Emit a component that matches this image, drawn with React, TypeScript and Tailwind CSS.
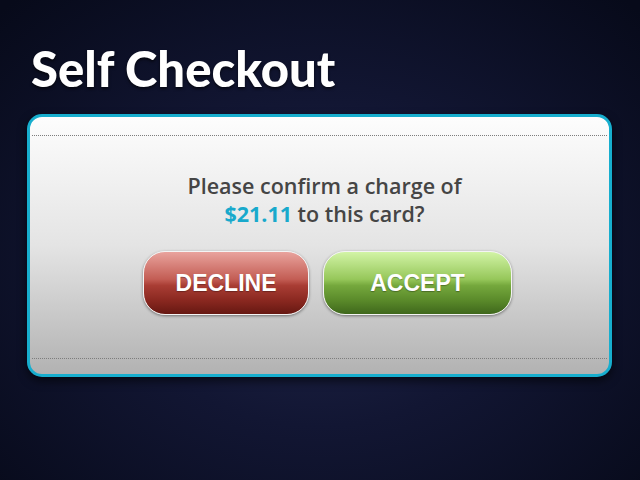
export default function App() {
  return (
    <div className="w-[640px] h-[480px] overflow-hidden bg-[radial-gradient(ellipse_70%_75%_at_50%_55%,#20264a_0%,#121633_45%,#070a1a_100%)] flex flex-col">
      {/* Title */}
      <h1 className="pl-[31px] pt-[44px] text-[49px] leading-[48px] font-black text-white font-['Lato',sans-serif] [text-shadow:0_2px_3px_rgba(0,0,0,0.6)]">
        Self Checkout
      </h1>

      {/* Confirm panel */}
      <div className="mt-[22px] ml-[27px] w-[585px] h-[263px] rounded-[15px] border-[3px] border-[#17aece] bg-gradient-to-b from-[#fdfdfd] via-[#e4e4e4] to-[#b2b2b2] shadow-[0_4px_10px_rgba(0,0,0,0.6)] flex flex-col">
        <div className="mt-[18px] mx-[2px] border-t border-dotted border-[#7d7d7d]" />

        <div className="mt-[36px] pl-[10px] text-center text-[21.5px] leading-[28px] font-semibold text-[#454545] font-['Open_Sans',sans-serif]">
          <p>Please confirm a charge of</p>
          <p>
            <span className="text-[#18a9cc] font-bold">$21.11</span> to this card?
          </p>
        </div>

        <div className="mt-[23px] pl-[113px] flex gap-[14px]">
          <button className="w-[166px] h-[64px] rounded-[22px] border-[1.5px] border-[#f4f4f4] shadow-[0_1px_3px_rgba(0,0,0,0.45)] bg-[linear-gradient(to_bottom,#e9a39d_0%,#c35d54_44%,#a93d34_54%,#8a2820_78%,#661812_100%)] text-white text-[23px] font-bold font-['Liberation_Sans',sans-serif] [text-shadow:0_1px_1px_rgba(0,0,0,0.3)]">
            DECLINE
          </button>
          <button className="w-[189px] h-[64px] rounded-[22px] border-[1.5px] border-[#f4f4f4] shadow-[0_1px_3px_rgba(0,0,0,0.45)] bg-[linear-gradient(to_bottom,#d2f4a6_0%,#96c75a_44%,#75a83d_54%,#5a8a2a_78%,#3f681c_100%)] text-white text-[23px] font-bold font-['Liberation_Sans',sans-serif] [text-shadow:0_1px_1px_rgba(0,0,0,0.3)]">
            ACCEPT
          </button>
        </div>

        <div className="flex-1" />
        <div className="mb-[15px] mx-[2px] border-t border-dotted border-[#7d7d7d]" />
      </div>
    </div>
  );
}
